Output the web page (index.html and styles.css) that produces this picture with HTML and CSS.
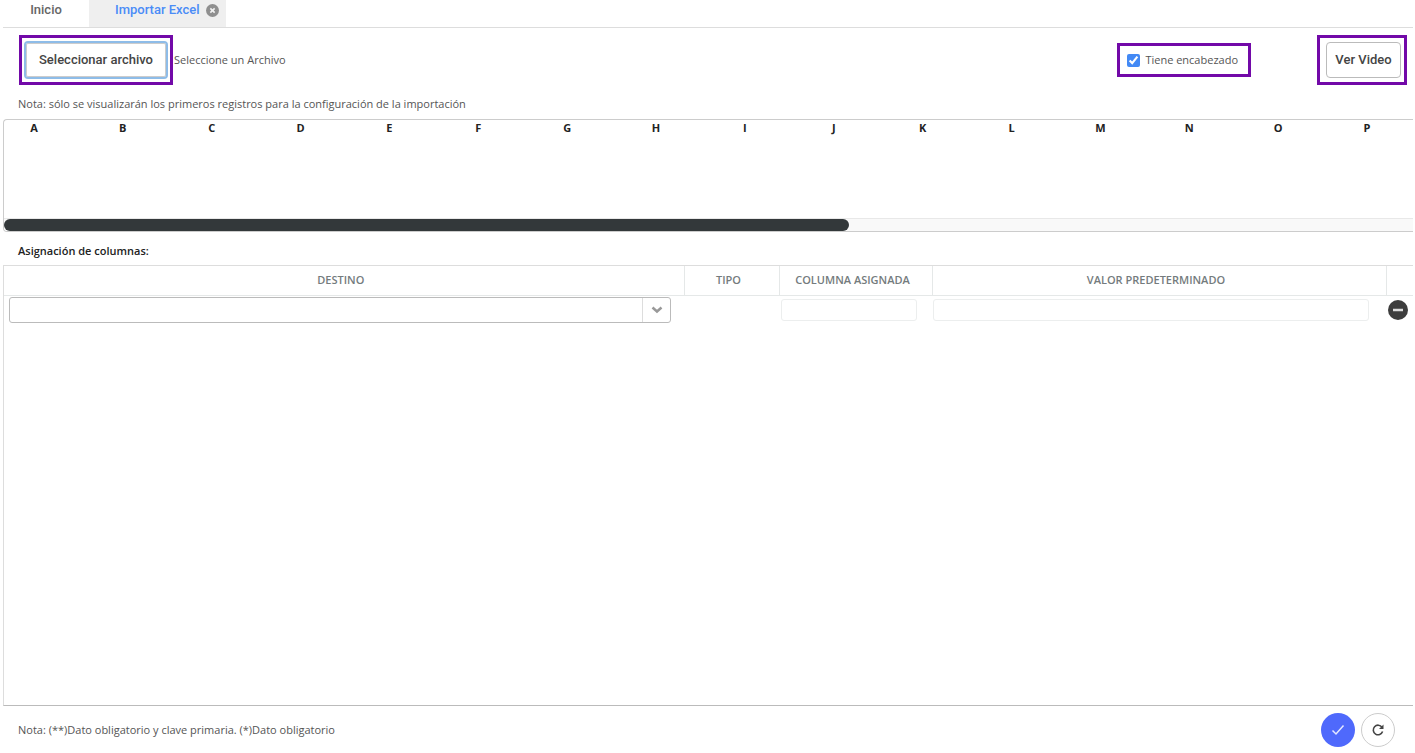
FILE: index.html
```
<!DOCTYPE html>
<html lang="es">
<head>
    <meta charset="UTF-8">
    <meta name="viewport" content="width=device-width, initial-scale=1.0">
    <title>Importar Excel</title>
    <link rel="stylesheet" href="styles.css">
</head>
<body>

    <nav class="tabs">
        <a href="#" class="tab">Inicio</a>
        <div class="tab active">
            <a href="#">Importar Excel</a>
            <button type="button" class="tab-close" aria-label="Cerrar">
                <svg viewBox="0 0 12 12" width="13" height="13">
                    <circle cx="6" cy="6" r="6" fill="#8f8f8f"/>
                    <path d="M4 4l4 4M8 4l-4 4" stroke="#f0f0f0" stroke-width="1.5"/>
                </svg>
            </button>
        </div>
    </nav>

    <div class="toolbar">
        <div class="highlight">
            <button type="button" class="btn btn-file">Seleccionar archivo</button>
        </div>
        <span class="file-name">Seleccione un Archivo</span>
        <div class="highlight highlight-check">
            <input type="checkbox" id="encabezado" checked>
            <label for="encabezado">Tiene encabezado</label>
        </div>
        <div class="highlight">
            <button type="button" class="btn btn-video">Ver Video</button>
        </div>
    </div>

    <p class="note">Nota: sólo se visualizarán los primeros registros para la configuración de la importación</p>

    <div class="preview">
        <div class="preview-body">
            <table class="preview-table">
                <tr>
                    <th>A</th><th>B</th><th>C</th><th>D</th><th>E</th><th>F</th><th>G</th><th>H</th>
                    <th>I</th><th>J</th><th>K</th><th>L</th><th>M</th><th>N</th><th>O</th><th>P</th>
                </tr>
            </table>
        </div>
        <div class="scroll-track"><div class="scroll-thumb"></div></div>
    </div>

    <h3>Asignación de columnas:</h3>

    <div class="assign">
        <table class="assign-table">
            <colgroup>
                <col>
                <col class="col-type">
                <col class="col-assigned">
                <col class="col-default">
                <col class="col-action">
            </colgroup>
            <thead>
                <tr>
                    <th>DESTINO</th>
                    <th>TIPO</th>
                    <th>COLUMNA ASIGNADA</th>
                    <th>VALOR PREDETERMINADO</th>
                    <th></th>
                </tr>
            </thead>
            <tbody>
                <tr>
                    <td class="cell-target">
                        <div class="select-box">
                            <select aria-label="Destino"><option></option></select>
                            <span class="select-arrow">
                                <svg viewBox="0 0 12 8" width="12" height="8">
                                    <path d="M1.5 1.5L6 5.5l4.5-4" fill="none" stroke="#999" stroke-width="2.5"/>
                                </svg>
                            </span>
                        </div>
                    </td>
                    <td></td>
                    <td class="cell-assigned"><input type="text" aria-label="Columna asignada"></td>
                    <td class="cell-default"><input type="text" aria-label="Valor predeterminado"></td>
                    <td class="cell-action">
                        <button type="button" class="btn-remove" aria-label="Quitar">
                            <svg viewBox="0 0 20 20" width="20" height="20">
                                <circle cx="10" cy="10" r="10" fill="#3d3d3d"/>
                                <path d="M5 10h10" stroke="#ddd" stroke-width="2.5"/>
                            </svg>
                        </button>
                    </td>
                </tr>
            </tbody>
        </table>
    </div>

    <footer>
        <p>Nota: (**)Dato obligatorio y clave primaria. (*)Dato obligatorio</p>
        <div class="actions">
            <button type="button" class="round accept" aria-label="Aceptar">
                <svg viewBox="0 0 14 12" width="14" height="12">
                    <path d="M1.5 6.5l3.500 3.5L12.5 1.5" fill="none" stroke="#e4e8ff" stroke-width="1.5"/>
                </svg>
            </button>
            <button type="button" class="round" aria-label="Recargar">
                <svg viewBox="0 0 14 14" width="14" height="14">
                    <path d="M11 4.2A4.8 4.8 0 1 0 11.6 8.6" fill="none" stroke="#444" stroke-width="1.6"/>
                    <path d="M12.5 1.500v4.500H8z" fill="#444"/>
                </svg>
            </button>
        </div>
    </footer>

</body>
</html>
```
FILE: styles.css
```
* {
    box-sizing: border-box;
}
body {
    margin: 0;
    padding: 0 2px 0 3px;
    min-height: 100vh;
    display: flex;
    flex-direction: column;
    background: #fff;
    color: #555;
    font-family: "Open Sans", sans-serif;
    font-size: 11px;
    line-height: 16px;
}
button {
    padding: 0;
    border: none;
    background: none;
    cursor: pointer;
}
svg {
    display: block;
}
p, h3 {
    margin: 0;
}

/* tabs */
.tabs {
    display: flex;
    height: 28px;
    border-bottom: 1px solid #ddd;
    font: 500 13px/20px Roboto, sans-serif;
}
.tab {
    width: 86px;
    text-align: center;
    color: #666;
    text-decoration: none;
}
.tab.active {
    display: flex;
    gap: 6px;
    width: 137px;
    padding-left: 26px;
    background: #efefef;
}
.tab.active a {
    color: #4a8cf7;
    text-decoration: none;
}
.tab-close {
    height: 21px;
}

/* toolbar */
.toolbar {
    display: flex;
    align-items: center;
    height: 64px;
    padding: 0 6px 0 16px;
}
.highlight {
    padding: 3px 2px;
    border: 3px solid #7209a8;
}
.btn {
    display: block;
    border: 1px solid #bbb;
    border-radius: 4px;
    background: #fff;
    color: #444;
    font: 500 13px/20px Roboto, sans-serif;
}
.btn-file {
    width: 144px;
    height: 38px;
    border: 2px solid #8ebce8;
    box-shadow: inset 0 0 0 1px #ccc;
}
.btn-video {
    width: 75px;
    height: 36px;
    margin: 1px 1px 1px 4px;
}
.file-name {
    margin-left: 1px;
    margin-right: auto;
}
.highlight-check {
    display: flex;
    align-items: center;
    gap: 5px;
    height: 34px;
    padding: 0 10px 0 7px;
    margin-right: 66px;
}
.highlight-check input {
    width: 13px;
    height: 13px;
    margin: 0;
    accent-color: #4389f5;
}

.note {
    padding: 4px 15px 7px;
}

/* preview of the sheet */
.preview {
    border: 1px solid #ccc;
    border-right: none;
    border-radius: 4px 0 0 4px;
    overflow: hidden;
}
.preview-body {
    height: 98px;
    overflow: hidden;
}
.preview-table {
    table-layout: fixed;
    width: 1422px;
    border-collapse: collapse;
}
.preview-table th {
    padding: 0 29px 0 0;
    color: #222;
    font-weight: 700;
}
.scroll-track {
    height: 13px;
    border-top: 1px solid #e8e8e8;
    background: #f9f9f9;
}
.scroll-thumb {
    width: 60%;
    height: 12px;
    border-radius: 6px;
    background: #33383a;
}

h3 {
    padding: 11px 15px 6px;
    color: #222;
    font-size: 11px;
    font-weight: 600;
}

/* column assignment */
.assign {
    flex: 1;
    border: 1px solid #ddd;
    border-right: none;
    border-bottom-color: #bbb;
}
.assign-table {
    width: 100%;
    table-layout: fixed;
    border-collapse: collapse;
}
.col-type {
    width: 95px;
}
.col-assigned {
    width: 153px;
}
.col-default {
    width: 454px;
}
.col-action {
    width: 27px;
}
.assign-table th {
    height: 29px;
    padding: 0 6px 0 0;
    border-bottom: 1px solid #e5e8e8;
    border-right: 1px solid #e5e8e8;
    color: #747b7d;
    font-weight: 600;
}
.assign-table th:last-child {
    border-right: none;
}
.assign-table td {
    height: 30px;
    padding: 0;
}
.assign-table .cell-target {
    padding: 0 13px 0 5px;
}
.assign-table .cell-assigned {
    padding: 0 15px 0 2px;
}
.assign-table .cell-default {
    padding: 0 17px 0 1px;
}
.assign-table .cell-action {
    padding-left: 2px;
}
.assign-table input {
    display: block;
    width: 100%;
    height: 22px;
    border: 1px solid #eceeee;
    border-radius: 3px;
}
.select-box {
    display: flex;
    height: 26px;
    border: 1px solid #bbb;
    border-radius: 3px;
}
.select-box select {
    flex: 1;
    appearance: none;
    border: none;
    background: none;
}
.select-arrow {
    display: flex;
    align-items: center;
    justify-content: center;
    width: 28px;
    border-left: 1px solid #ddd;
}
.btn-remove {
    display: block;
}

footer {
    display: flex;
    align-items: center;
    justify-content: space-between;
    height: 47px;
    padding: 0 18px 0 15px;
}
.actions {
    display: flex;
    gap: 6px;
}
.round {
    display: flex;
    align-items: center;
    justify-content: center;
    width: 34px;
    height: 34px;
    border: 1px solid #ccc;
    border-radius: 50%;
}
.round.accept {
    border: none;
    background: #4f69fc;
}
```
